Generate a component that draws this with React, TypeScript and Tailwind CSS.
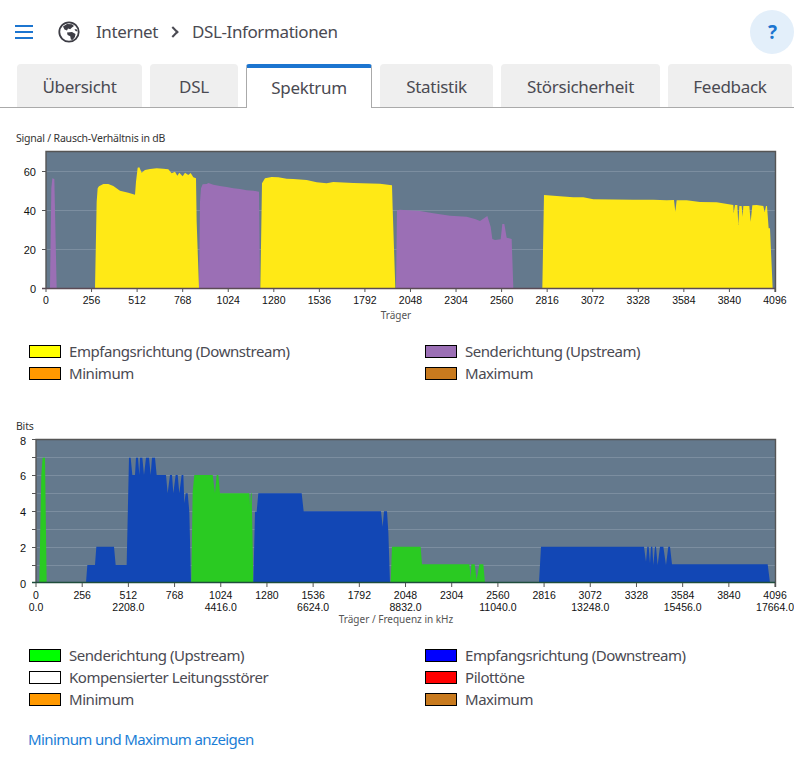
import React from 'react';

// chart outlines are traced at 3x, so they sit in a group scaled by 1/3
const snrYellow = [
  '285,490 290,230 293,190 297,184 310,177 325,177 340,183 360,197 385,203 405,209 408,170 413,128 418,127 425,143 435,135 450,132 470,130 490,131 505,133 515,145 525,140 532,152 538,143 548,154 555,143 565,150 572,144 580,157 588,160 590,290 597,490',
  '781,490 786,175 795,160 815,156 835,157 860,161 880,162 920,165 950,172 980,175 1000,171 1060,174 1140,176 1176,181 1178,250 1186,490',
  '1627,490 1632,210 1680,214 1720,217 1750,217 1780,223 1900,224 1960,224 2000,226 2022,225 2026,260 2030,226 2060,226 2100,231 2150,232 2200,240 2201,265 2205,240 2212,240 2215,300 2218,243 2225,243 2228,275 2230,243 2248,243 2252,290 2257,241 2270,240 2290,243 2294,262 2298,243 2301,243 2306,310 2310,310 2318,490',
];
const snrPurple = [
  '150,490 154,190 157,160 163,162 170,490',
  '597,490 600,230 603,190 608,178 620,177 625,174 640,179 660,183 680,186 700,190 720,192 740,196 760,197 777,200 780,490',
  '1188,490 1191,256 1200,254 1260,258 1300,265 1350,272 1400,275 1425,282 1440,288 1462,273 1472,305 1477,342 1485,345 1502,343 1507,297 1513,297 1520,338 1535,342 1540,490',
];
const bitsGreen = [
  '118,503 124,180 128,128 135,128 140,503',
  '574,503 578,230 583,180 638,180 645,235 650,180 655,180 660,235 748,235 750,270 753,235 755,235 760,503',
  '1172,503 1176,395 1262,395 1266,448 1408,448 1412,490 1414,448 1424,448 1430,495 1438,448 1450,448 1455,503',
];
const bitsBlue = [
  '258,503 262,450 285,450 289,395 342,395 347,450 380,450 387,128 392,128 397,180 405,180 408,128 414,128 418,180 420,128 427,128 432,180 438,128 447,128 452,180 456,128 465,128 470,180 498,180 503,235 510,180 516,180 520,235 527,180 533,180 538,235 545,180 550,180 553,265 557,235 563,235 568,290 573,503',
  '760,503 765,290 770,290 775,235 905,235 911,289 1143,289 1148,335 1152,289 1161,289 1165,350 1170,503',
  '1617,503 1623,395 1932,395 1938,440 1942,395 1946,395 1950,445 1953,395 1957,395 1960,450 1965,395 1968,395 1973,450 1980,395 1990,395 1998,450 2005,395 2010,395 2016,448 2303,448 2310,503',
];

const carriers = ['0', '256', '512', '768', '1024', '1280', '1536', '1792', '2048', '2304', '2560', '2816', '3072', '3328', '3584', '3840', '4096'];
const tickFont = "'Liberation Sans', sans-serif";

const SnrChart = () => (
  <svg viewBox="0 146 794 176" className="block w-[794px] h-[176px]">
    <rect x="46" y="152" width="729" height="136" fill="#64798d" />
    {[171.5, 210.5, 249.5].map(y => (
      <line key={y} x1="46" x2="775" y1={y} y2={y} stroke="#7c8ea0" />
    ))}
    <g transform="translate(0 125) scale(0.33333)">
      {snrYellow.map(p => <polygon key={p} points={p} fill="#ffe916" />)}
      {snrPurple.map(p => <polygon key={p} points={p} fill="#9b6fb5" />)}
    </g>
    <path d="M46 288V151.5H775.500V292" fill="none" stroke="#555" strokeWidth="1.4" />
    <line x1="42" x2="775" y1="288.5" y2="288.5" stroke="#5b4a55" strokeWidth="1.4" />
    {[171.5, 210.5, 249.5].map(y => (
      <line key={y} x1="42" x2="46" y1={y} y2={y} stroke="#555" />
    ))}
    {[60, 40, 20, 0].map((v, i) => (
      <text key={v} x="36" y={[175.5, 214.5, 253.5, 292.5][i]} textAnchor="end" fontSize="11" fill="#111" fontFamily={tickFont}>{v}</text>
    ))}
    {carriers.map((c, i) => {
      const x = 46 + i * 45.56;
      return (
        <g key={c}>
          <line x1={x} x2={x} y1="288" y2="292" stroke="#555" />
          <text x={x} y="304" textAnchor="middle" fontSize="10.5" fill="#111" fontFamily={tickFont}>{c}</text>
        </g>
      );
    })}
    <text x="396" y="319" textAnchor="middle" fontSize="10" fill="#555">Träger</text>
  </svg>
);

const BitsChart = () => (
  <svg viewBox="0 434 794 194" className="block w-[794px] h-[194px]">
    <rect x="36" y="440" width="739" height="143" fill="#64798d" />
    {[457.5, 475.5, 493.5, 511.5, 529.5, 547.5, 565.5].map(y => (
      <line key={y} x1="36" x2="775" y1={y} y2={y} stroke="#7c8ea0" />
    ))}
    <g transform="translate(0 415) scale(0.33333)">
      {bitsGreen.map(p => <polygon key={p} points={p} fill="#2aca22" />)}
      {bitsBlue.map(p => <polygon key={p} points={p} fill="#1247b5" />)}
    </g>
    <path d="M36 583V439.5H775.500V587" fill="none" stroke="#555" strokeWidth="1.4" />
    <line x1="32" x2="775" y1="582.5" y2="582.5" stroke="#1f4d3c" strokeWidth="1.4" />
    {[439.5, 457.5, 475.5, 493.5, 511.5, 529.5, 547.5, 565.5].map(y => (
      <line key={y} x1="32" x2="36" y1={y} y2={y} stroke="#555" />
    ))}
    {[8, 6, 4, 2, 0].map((v, i) => (
      <text key={v} x="23" y={[445, 480, 516, 552, 588][i]} textAnchor="middle" fontSize="11" fill="#111" fontFamily={tickFont}>{v}</text>
    ))}
    {carriers.map((c, i) => {
      const x = 36 + i * 46.19;
      return (
        <g key={c}>
          <line x1={x} x2={x} y1="583" y2="587" stroke="#555" />
          <text x={x} y="599" textAnchor="middle" fontSize="10.5" fill="#111" fontFamily={tickFont}>{c}</text>
          {i % 2 === 0 && (
            <text x={x} y="611" textAnchor="middle" fontSize="10.5" fill="#111" fontFamily={tickFont}>{(i * 1104).toFixed(1)}</text>
          )}
        </g>
      );
    })}
    <text x="396" y="623" textAnchor="middle" fontSize="10" fill="#555">Träger / Frequenz in kHz</text>
  </svg>
);

const LegendItem: React.FC<{ color: string; label: string }> = ({ color, label }) => (
  <div className="flex items-center h-[22px]">
    <span className="w-[32px] h-[13px] border border-black mr-2" style={{ backgroundColor: color }} />
    <span>{label}</span>
  </div>
);

const tabs = [
  { label: 'Übersicht', width: 'w-[125px]' },
  { label: 'DSL', width: 'w-[88px]' },
  { label: 'Spektrum', width: 'w-[126px]', active: true },
  { label: 'Statistik', width: 'w-[113px]' },
  { label: 'Störsicherheit', width: 'w-[159px]' },
  { label: 'Feedback', width: 'w-[124px]' },
];

export default function App() {
  return (
    <div className="w-[794px] h-[770px] overflow-hidden bg-white text-[#4a4a52] font-['Noto_Sans',sans-serif]">
      <header className="h-[64px] flex items-center pl-[15px] relative">
        <div className="flex flex-col gap-[4px] w-[18px]">
          <span className="h-[2px] bg-[#1c75d0]" />
          <span className="h-[2px] bg-[#1c75d0]" />
          <span className="h-[2px] bg-[#1c75d0]" />
        </div>
        <svg viewBox="0 0 22 22" className="w-[22px] h-[22px] ml-[25px]">
          <circle cx="11" cy="11" r="9.7" fill="#fff" stroke="#3d3d45" strokeWidth="1.8" />
          <path d="M5 5.500 9 3l5 .3 2 1.700-2 1.600-1.800 1.600-2.200-.6-1 2-2.500-1.200zM9 11.500l5-.5 3.500 2-.6 3-2.400 3-1.600-.5-.7-3.300-2.600-1.200zM16.500 8l2.500.5.5 2-2-.5z" fill="#3d3d45" />
        </svg>
        <nav className="flex items-center ml-[16px] text-[17px] tracking-[-0.4px]">
          <span>Internet</span>
          <span className="mx-[13px] w-[8px] h-[8px] border-t-2 border-r-2 border-[#4a4a52] rotate-45 -translate-x-[2px]" />
          <span>DSL-Informationen</span>
        </nav>
        <div className="absolute right-0 top-[10px] w-[44px] h-[44px] rounded-full bg-[#e3effa] flex items-center justify-center text-[#1c75d0] text-[19px] font-bold pl-[1px]">?</div>
      </header>

      <div className="flex gap-2 pl-[17px] h-[44px] border-b border-[#aaa]">
        {tabs.map(t => (
          <div
            key={t.label}
            className={
              t.active
                ? `${t.width} h-[44px] bg-white border-x border-[#aaa] border-t-4 border-t-[#1c75d0] rounded-t-[3px] flex items-center justify-center text-[17px] tracking-[-0.3px]`
                : `${t.width} h-[43px] bg-[#efefef] rounded-t-[4px] flex items-center justify-center text-[17px] tracking-[-0.3px] pt-[2px]`
            }
          >
            {t.label}
          </div>
        ))}
      </div>

      <div className="h-[38px] pl-[16px] pt-[23px] text-[10.5px] leading-[14px] text-[#333] tracking-[-0.2px]">Signal / Rausch-Verhältnis in dB</div>
      <SnrChart />
      <div className="grid grid-cols-[396px_1fr] pl-[29px] mt-[18px] text-[15px] tracking-[-0.45px]">
        <LegendItem color="#ffff00" label="Empfangsrichtung (Downstream)" />
        <LegendItem color="#9b6fb5" label="Senderichtung (Upstream)" />
        <LegendItem color="#ff9900" label="Minimum" />
        <LegendItem color="#c87a1e" label="Maximum" />
      </div>

      <div className="h-[15px] mt-[35px] pl-[16px] text-[10.5px] leading-[14px] text-[#333] tracking-[-0.2px]">Bits</div>
      <BitsChart />
      <div className="grid grid-cols-[396px_1fr] pl-[29px] mt-[16px] text-[15px] tracking-[-0.45px]">
        <LegendItem color="#00ff00" label="Senderichtung (Upstream)" />
        <LegendItem color="#0000ff" label="Empfangsrichtung (Downstream)" />
        <LegendItem color="#ffffff" label="Kompensierter Leitungsstörer" />
        <LegendItem color="#ff0000" label="Pilottöne" />
        <LegendItem color="#ff9900" label="Minimum" />
        <LegendItem color="#c87a1e" label="Maximum" />
      </div>
      <a className="block mt-[18px] ml-[28px] text-[15px] tracking-[-0.6px] text-[#1c7ed6]">Minimum und Maximum anzeigen</a>
    </div>
  );
}
